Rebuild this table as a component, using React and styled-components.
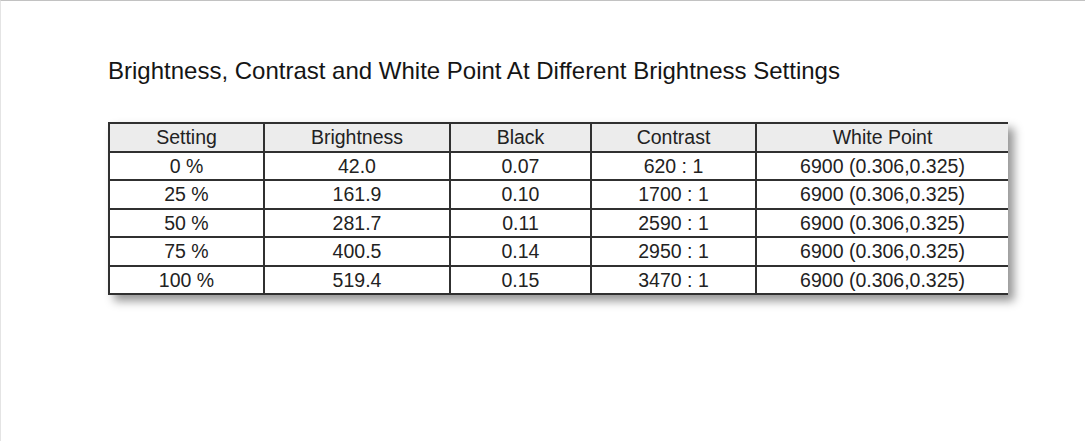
import styled, { createGlobalStyle } from "styled-components";

const GlobalStyle = createGlobalStyle`
  html, body {
    margin: 0;
    padding: 0;
    background: #ffffff;
  }
`;

const Page = styled.div`
  box-sizing: border-box;
  width: 1085px;
  height: 441px;
  border-top: 1px solid #c2c2c2;
  border-left: 1px solid #e4e4e4;
  background: #ffffff;
  padding: 56px 0 0 107px;
  font-family: "Liberation Sans", Arial, sans-serif;
  color: #1a1a1a;
`;

const Title = styled.h1`
  margin: 0 0 37px 0;
  font-size: 24px;
  font-weight: normal;
  line-height: 28px;
  color: #151515;
`;

const Table = styled.table`
  width: 900px;
  table-layout: fixed;
  border-collapse: separate;
  border-spacing: 0;
  border-top: 2px solid #303030;
  box-shadow: 6px 6px 9px rgba(0, 0, 0, 0.42);
`;

const Cell = styled.td`
  padding: 0;
  height: 26.5px;
  line-height: 26.5px;
  font-size: 19.5px;
  font-weight: normal;
  text-align: center;
  color: #222;
  white-space: nowrap;
  border-left: 2px solid #303030;
  border-bottom: 2px solid #303030;
  background: ${(props) => (props.$head ? "#ececec" : "#ffffff")};
`;

const columns = [155, 186, 141, 165, 253];
const headers = ["Setting", "Brightness", "Black", "Contrast", "White Point"];

const rows = [
  ["0 %", "42.0", "0.07", "620 : 1", "6900 (0.306,0.325)"],
  ["25 %", "161.9", "0.10", "1700 : 1", "6900 (0.306,0.325)"],
  ["50 %", "281.7", "0.11", "2590 : 1", "6900 (0.306,0.325)"],
  ["75 %", "400.5", "0.14", "2950 : 1", "6900 (0.306,0.325)"],
  ["100 %", "519.4", "0.15", "3470 : 1", "6900 (0.306,0.325)"],
];

const App = () => {
  return (
    <>
      <GlobalStyle />
      <Page>
        <Title>
          Brightness, Contrast and White Point At Different Brightness Settings
        </Title>
        <Table>
          <colgroup>
            {columns.map((w, i) => (
              <col key={i} style={{ width: w }} />
            ))}
          </colgroup>
          <thead>
            <tr>
              {headers.map((h) => (
                <Cell as="th" key={h} $head>
                  {h}
                </Cell>
              ))}
            </tr>
          </thead>
          <tbody>
            {rows.map((r) => (
              <tr key={r[0]}>
                {r.map((v, i) => (
                  <Cell key={i}>{v}</Cell>
                ))}
              </tr>
            ))}
          </tbody>
        </Table>
      </Page>
    </>
  );
};

export default App;
